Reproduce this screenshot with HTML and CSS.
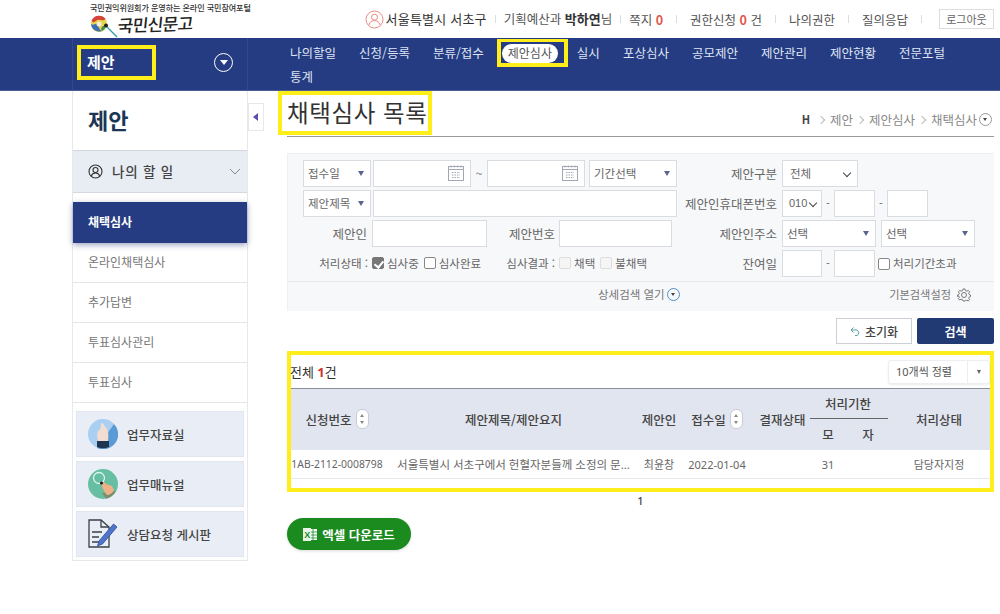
FILE: index.html
```html
<!DOCTYPE html>
<html lang="ko">
<head>
<meta charset="utf-8">
<title>국민신문고 채택심사 목록</title>
<link rel="stylesheet" href="styles.css">
</head>
<body>
<header class="top">
  <div class="logo">
    <div class="logo-sub">국민권익위원회가 운영하는 온라인 국민참여포털</div>
    <div class="logo-main">
      <svg class="logo-mark" width="28" height="24" viewBox="0 0 28 24"><circle cx="9" cy="10" r="8" fill="#e9d54a"/><path d="M1.500 7a8 8 0 0 1 14-2c-3 3-5 0-8 1s-3 4-6 1z" fill="#d5423a"/><path d="M1 10c3 2 4-1 6 0s1 5 5 7a8 8 0 0 1-11-7z" fill="#3c6fb5"/><path d="M12 17c-2-3 0-5 4-6a8 8 0 0 1-4 6z" fill="#3a8f5c"/><circle cx="9" cy="10" r="2.500" fill="#f3efe0"/><path d="M16 12l11 11" stroke="#2f9aa0" stroke-width="1.300"/><circle cx="16" cy="11.500" r="2" fill="#222"/></svg>
      <span class="logo-text">국민신문고</span>
    </div>
  </div>
  <nav class="util">
    <svg class="user-ico" width="19" height="19" viewBox="0 0 19 19" fill="none" stroke="#e98b84" stroke-width="1"><circle cx="9.5" cy="9.5" r="8.5"/><circle cx="9.5" cy="7.2" r="3"/><path d="M4 15c.6-3 2.8-4.4 5.5-4.4S14.400 12 15 15"/></svg>
    <span class="u-org">서울특별시 서초구</span><i class="sep"></i>
    <span>기획예산과 <b>박하연</b>님</span><i class="sep"></i>
    <span>쪽지 <em>0</em></span><i class="sep wide"></i>
    <span>권한신청 <em>0</em> 건</span><i class="sep wide"></i>
    <span>나의권한</span><i class="sep wide"></i>
    <span>질의응답</span><i class="sep wide"></i>
    <span class="logout">로그아웃</span>
  </nav>
</header>

<div class="navbar">
  <div class="nav-left">
    <span class="nav-title">제안</span>
    <span class="round-down"></span>
  </div>
  <ul class="gnb">
    <li>나의할일</li><li>신청/등록</li><li>분류/접수</li>
    <li class="gnb-on"><span>제안심사</span></li>
    <li>실시</li><li>포상심사</li><li>공모제안</li><li>제안관리</li><li>제안현황</li><li>전문포털</li><li>통계</li>
  </ul>
</div>

<div class="page">
  <aside class="side">
    <h2 class="side-title">제안</h2>
    <div class="side-todo">
      <svg width="15" height="15" viewBox="0 0 15 15" fill="none" stroke="#333" stroke-width="1.100"><circle cx="7.500" cy="7.500" r="6.500"/><circle cx="7.500" cy="6" r="2.500"/><path d="M3.300 12c.6-2 2.200-3 4.200-3s3.600 1 4.200 3"/></svg>
      <span class="todo-text">나의 할 일</span>
      <svg class="chev" width="12" height="7" viewBox="0 0 12 7" fill="none" stroke="#888"><path d="M1 1l5 5 5-5"/></svg>
    </div>
    <ul class="side-menu">
      <li class="on">채택심사</li><li>온라인채택심사</li><li>추가답변</li><li>투표심사관리</li><li>투표심사</li>
    </ul>
    <div class="side-links">
      <a class="side-link">
        <svg width="30" height="30" viewBox="0 0 30 30"><circle cx="15" cy="15" r="15" fill="#a9cff2"/><path d="M26 5a15 15 0 0 1-14 25 15 15 0 0 1-3-1z" fill="#5b9bd5"/><path d="M10 22c-1-5-1-8 0-10l2-1 1-6c0-1.500 2-1.500 2.500 0 1 2 3 4 4 6 1 3 1 7 .5 11z" fill="#f3dcd0"/><path d="M9 22h12v6a15 15 0 0 1-12 0z" fill="#1d3550"/></svg>
        <span>업무자료실</span>
      </a>
      <a class="side-link">
        <svg width="30" height="30" viewBox="0 0 30 30"><circle cx="15" cy="15" r="15" fill="#66bfa2"/><circle cx="11" cy="9" r="5.500" fill="none" stroke="#e2f4ed" stroke-width="1.300"/><path d="M28 22a15 15 0 0 1-10 7.700L14 24z" fill="#7c8f6a"/><path d="M13 14l3-1 2 2 6 2 2 4c-1 3-5 5-7 5-3-3-5-8-6-12z" fill="#eeb187"/><circle cx="13.500" cy="14" r="1.600" fill="#222"/></svg>
        <span>업무매뉴얼</span>
      </a>
      <a class="side-link">
        <svg width="30" height="30" viewBox="0 0 30 30" fill="none"><path d="M1 1h12l8 7v20H1z" stroke="#3a3f48" stroke-width="1.300"/><path d="M13 1v7h8M4 13h10M4 18h7M4 23h7" stroke="#3a3f48" stroke-width="1.300"/><path d="M11 22l-1.500 5 5-2L29 8l-3.500-3z" fill="#4f74c9" stroke="#2c4b9a" stroke-width=".8"/></svg>
        <span>상담요청 게시판</span>
      </a>
    </div>
  </aside>

  <button class="side-toggle" aria-label="메뉴 접기"></button>

  <main class="main">
    <div class="title-row">
      <h1 class="title">채택심사 목록</h1>
      <div class="crumb"><b>H</b><s></s>제안<s></s>제안심사<s></s>채택심사<span class="mini-down"></span></div>
    </div>

    <section class="search">
      <div class="s-row">
        <div class="s-left">
          <span class="ctl sel w68">접수일</span>
          <span class="ctl cal w98"><svg width="16" height="16" viewBox="0 0 16 16" fill="none" stroke="#a2a8b2"><rect x=".5" y="1.500" width="15" height="14"/><path d="M3 .5v2M6.300 .5v2M9.700 .5v2M13 .5v2M1 4.500h14"/><path d="M4 7.500h8M4 10h8M4 12.500h8" stroke-dasharray="1.500 1"/></svg></span>
          <span class="tilde">~</span>
          <span class="ctl cal w98"><svg width="16" height="16" viewBox="0 0 16 16" fill="none" stroke="#a2a8b2"><rect x=".5" y="1.500" width="15" height="14"/><path d="M3 .5v2M6.300 .5v2M9.700 .5v2M13 .5v2M1 4.500h14"/><path d="M4 7.500h8M4 10h8M4 12.500h8" stroke-dasharray="1.500 1"/></svg></span>
          <span class="ctl sel w88 ml2">기간선택</span>
        </div>
        <label class="s-label">제안구분</label>
        <div class="s-right"><span class="ctl chv w76">전체</span></div>
      </div>
      <div class="s-row">
        <div class="s-left">
          <span class="ctl sel w68">제안제목</span>
          <span class="ctl grow"></span>
        </div>
        <label class="s-label">제안인휴대폰번호</label>
        <div class="s-right">
          <span class="ctl chv w40 num">010</span><span class="dash">-</span>
          <span class="ctl w41"></span><span class="dash">-</span>
          <span class="ctl w41"></span>
        </div>
      </div>
      <div class="s-row">
        <div class="s-left">
          <label class="in-label l64">제안인</label>
          <span class="ctl w115"></span>
          <label class="in-label l65">제안번호</label>
          <span class="ctl w113"></span>
        </div>
        <label class="s-label">제안인주소</label>
        <div class="s-right">
          <span class="ctl sel w94">선택</span>
          <span class="ctl sel w94 ml5">선택</span>
        </div>
      </div>
      <div class="s-row">
        <div class="s-left checks">
          <span class="chk-title">처리상태 :</span>
          <i class="box checked"></i><span class="chk-t">심사중</span>
          <i class="box"></i><span class="chk-t">심사완료</span>
          <span class="chk-title res">심사결과 :</span>
          <i class="box off"></i><span class="chk-t">채택</span>
          <i class="box off"></i><span class="chk-t">불채택</span>
        </div>
        <label class="s-label">잔여일</label>
        <div class="s-right">
          <span class="ctl w40"></span><span class="dash">-</span>
          <span class="ctl w41"></span>
          <i class="box ml3"></i><span class="chk-t">처리기간초과</span>
        </div>
      </div>
      <div class="s-foot">
        <span class="open">상세검색 열기<span class="mini-down blue"></span></span>
        <span class="basic">기본검색설정
          <svg width="14" height="14" viewBox="0 0 14 14" fill="none" stroke="#777"><circle cx="7" cy="7" r="2.500"/><path d="M6 1h2l.4 1.600 1.500.6L11.300 2.400l1.300 1.400-.9 1.400.6 1.400L13.500 7v1.500l-1.200.4-.6 1.400.9 1.300-1.300 1.400-1.400-.8-1.500.5L8 13H6l-.4-1.300-1.500-.5-1.400.8-1.300-1.400.9-1.300-.6-1.400L.5 8.500V7l1.200-.4.6-1.400-.9-1.400 1.300-1.400 1.400.8 1.500-.6z"/></svg>
        </span>
      </div>
    </section>

    <div class="actions">
      <button class="btn-reset"><svg width="11" height="9" viewBox="0 0 11 9" fill="none" stroke="#5aa0a8"><path d="M3.500.5L1 3l2.500 2.500M1 3h6a3 3 0 0 1 0 5.500H5"/></svg>초기화</button>
      <button class="btn-search">검색</button>
    </div>

    <section class="list">
      <div class="list-head">
        <span class="total">전체 <em>1</em>건</span>
        <div class="per"><span>10개씩 정렬</span><i></i></div>
      </div>
      <table class="tbl">
        <colgroup>
          <col class="c1"><col class="c2"><col class="c3"><col class="c4"><col class="c5"><col class="c6"><col class="c7"><col class="c8">
        </colgroup>
        <thead>
          <tr>
            <th rowspan="2"><span class="th-in">신청번호<span class="sort"></span></span></th>
            <th rowspan="2" class="th-subj">제안제목/제안요지</th>
            <th rowspan="2">제안인</th>
            <th rowspan="2"><span class="th-in">접수일<span class="sort"></span></span></th>
            <th rowspan="2">결재상태</th>
            <th colspan="2" class="th-top">처리기한</th>
            <th rowspan="2">처리상태</th>
          </tr>
          <tr><th class="th-sub">모</th><th class="th-sub">자</th></tr>
        </thead>
        <tbody>
          <tr>
            <td class="no">1AB-2112-0008798</td>
            <td class="subj">서울특별시 서초구에서 헌혈자분들께 소정의 문...</td>
            <td>최윤창</td>
            <td>2022-01-04</td>
            <td></td>
            <td>31</td>
            <td></td>
            <td>담당자지정</td>
          </tr>
        </tbody>
      </table>
    </section>
    <div class="pager">1</div>
    <button class="btn-excel">
      <svg width="14" height="13" viewBox="0 0 14 13"><rect x="5" y="1" width="9" height="11" fill="#fff"/><path d="M7 1v11M10 1v11M5 4h9M5 7h9M5 10h9" stroke="#1a8a22" stroke-width=".8"/><rect y="0" width="8" height="13" fill="#e9f5e9"/><text x="1.200" y="10" class="x-mark">X</text></svg>
      엑셀 다운로드
    </button>
  </main>
</div>
</body>
</html>
```

FILE: styles.css
```css
* { box-sizing: border-box; }
html, body { margin: 0; padding: 0; }
body {
  width: 1000px; height: 614px; overflow: hidden; background: #fff; color: #555;
  font: 12px/1.2 "Noto Sans CJK KR", "Noto Sans", sans-serif;
}
ul { list-style: none; margin: 0; padding: 0; }
h1, h2 { margin: 0; font-weight: 400; }
em { font-style: normal; }
button { font-family: inherit; cursor: pointer; }

/* top bar */
.top { height: 38px; display: flex; padding-left: 90px; padding-right: 6px; justify-content: space-between; }
.logo { width: 170px; padding-top: 3px; }
.logo-sub { font-size: 8.100px; line-height: 10px; color: #333; white-space: nowrap; font-weight: 500; letter-spacing: -.1px; }
.logo-main { display: flex; align-items: flex-start; height: 25px; }
.logo-mark { margin-top: 1px; }
.logo-text { font-size: 17px; font-weight: 500; line-height: 22px; color: #222; margin-left: 0; letter-spacing: -.7px; transform: skewX(-8deg) rotate(-2deg); }
.util { display: flex; align-items: center; height: 38px; font-size: 12.500px; color: #555; white-space: nowrap; }
.user-ico { margin-right: 2px; }
.u-org { font-size: 13px; color: #333; letter-spacing: .2px; }
.util b { font-weight: 700; color: #333; font-size: 13px; }
.util em { color: #e0574f; font-weight: 700; }
.sep { width: 1px; height: 8px; background: #ddd; margin: 0 8px; }
.sep.wide { margin: 0 13px; }
.logout { border: 1px solid #ddd; height: 20px; width: 55px; font-size: 11px; line-height: 18px; text-align: center; color: #666; margin-left: 4px; }

/* nav */
.navbar { height: 53px; background: #253c82; display: flex; padding-left: 72px; border-bottom: 1px solid #4a5c96; }
.nav-left {
  width: 176px; display: flex; align-items: flex-start; justify-content: space-between;
  border-left: 1px solid #33488c; border-right: 1px solid #33488c; padding: 7px 14px 0 4px;
}
.nav-title {
  width: 79px; height: 35px; border: 4px solid #ffee1a; color: #fff; font-weight: 700; font-size: 15px;
  line-height: 26px; padding-left: 6px;
}
.round-down {
  width: 19px; height: 19px; margin-top: 8px; border: 1px solid #fff; border-radius: 50%; position: relative;
}
.round-down::after {
  content: ""; position: absolute; left: 5px; top: 6px; border: 4px solid transparent; border-top: 5px solid #fff; border-bottom: 0;
}
.gnb { display: flex; flex-wrap: wrap; width: 680px; margin-left: 42px; column-gap: 23px; padding-top: 4px; }
.gnb li { color: #dfe4f2; font-size: 12.500px; line-height: 22px; height: 22px; white-space: nowrap; }
.gnb li.gnb-on {
  height: 28px; width: 71px; margin: -3px -14px -3px -10px; border: 4px solid #ffee1a; border-top-width: 3px; padding: 2px 0 0 1px;
}
.gnb-on span { display: block; background: #fff; color: #555; border-radius: 10px; width: 56px; height: 19px; line-height: 18px; text-align: center; font-size: 12px; }
.gnb li:last-child { flex-basis: 100%; }

/* page */
.page { display: flex; padding-left: 72px; }
.side { width: 176px; height: 470px; border: 1px solid #e6e8ec; border-top: 0; }
.side-title { height: 59px; font-size: 22px; font-weight: 700; color: #1c3655; line-height: 57px; padding-left: 15px; }
.side-todo {
  height: 43px; display: flex; align-items: center; background: #e8edf4; padding: 0 6px 0 15px;
  border-top: 1px solid #d3d8df; border-bottom: 1px solid #d3d8df;
}
.todo-text { flex: 1; margin-left: 9px; font-size: 13.500px; font-weight: 500; letter-spacing: .8px; color: #444; }
.side-menu { padding-top: 9px; }
.side-menu li {
  height: 40px; line-height: 37px; padding-left: 15px; border-bottom: 1px solid #e3e5e9; font-size: 12px; color: #777;
}
.side-menu li.on { height: 41px; line-height: 39px; background: #253c82; color: #fff; font-weight: 700; border: 0; box-shadow: 0 2px 6px rgba(30,50,110,.45); }
.side-links { padding: 8px 3px 0; display: flex; flex-direction: column; gap: 4px; }
.side-link {
  height: 46px; background: #e9edf5; border: 1px solid #e2e6ee; display: flex; align-items: center; gap: 9px; padding-left: 11px;
  font-size: 12.500px; font-weight: 500; color: #444;
}
.side-toggle {
  width: 16px; height: 28px; margin-top: 12px; padding: 0; background: #fff; border: 1px solid #e6e8ec; position: relative;
}
.side-toggle::after {
  content: ""; position: absolute; left: 4px; top: 9px; border: 4px solid transparent; border-right: 5px solid #5a4fb5; border-left: 0;
}
.main { width: 707px; margin-left: 23px; }

.title-row { height: 46px; border-bottom: 1px solid #999; display: flex; justify-content: space-between; align-items: flex-end; }
.title {
  margin: 0 0 1px -9px; width: 154px; height: 44px; border: 4px solid #ffee1a; font-size: 23.500px; color: #333;
  line-height: 34px; padding-left: 5px; white-space: nowrap; letter-spacing: .6px;
}
.crumb { display: flex; align-items: center; font-size: 12.500px; color: #888; padding: 0 2px 9px 0; }
.crumb b { color: #444; font-size: 11px; margin-right: 4px; }
.crumb s {
  width: 6px; height: 6px; border-top: 1px solid #bbb; border-right: 1px solid #bbb; transform: rotate(45deg); margin: 0 6px 0 4px;
}
.mini-down { display: inline-block; width: 13px; height: 13px; border: 1px solid #999; border-radius: 50%; margin-left: 2px; position: relative; flex: none; }
.mini-down::after { content: ""; position: absolute; left: 3px; top: 4px; border: 2.500px solid transparent; border-top: 3.500px solid #444; border-bottom: 0; }
.mini-down.blue { border-color: #4d8fc4; }

/* search */
.search { margin-top: 16px; height: 158px; background: #f7f8fa; border: 1px solid #eff0f3; border-width: 1px 0 0 1px; padding-top: 6px; }
.s-row { display: flex; height: 27px; margin-bottom: 3px; align-items: center; }
.s-left { width: 389px; padding-left: 15px; display: flex; align-items: center; gap: 2px; flex: none; }
.s-label { width: 100px; text-align: right; font-size: 12.500px; color: #666; white-space: nowrap; flex: none; }
.s-right { display: flex; align-items: center; margin-left: 5px; }
.ctl {
  height: 27px; background: #fff; border: 1px solid #d9dce1; font-size: 11.500px; color: #666; line-height: 25px; padding-left: 4px;
  display: block; position: relative; flex: none;
}
.sel::after { content: ""; position: absolute; right: 6px; top: 10px; border: 3.500px solid transparent; border-top: 5px solid #5a6490; border-bottom: 0; }
.chv { padding-left: 7px; }
.chv::after {
  content: ""; position: absolute; right: 7px; top: 9px; width: 5px; height: 5px; border-right: 1.500px solid #444; border-bottom: 1.500px solid #444; transform: rotate(45deg);
}
.num { padding-left: 6px; font: 11px/25px "Liberation Sans", sans-serif; }
.num::after { right: 5px; }
.cal svg { position: absolute; right: 6px; top: 4px; }
.w68 { width: 68px; } .w98 { width: 98px; } .w88 { width: 88px; } .w76 { width: 76px; }
.w40 { width: 40px; } .w41 { width: 41px; } .w115 { width: 115px; } .w113 { width: 113px; } .w94 { width: 94px; }
.grow { flex: 1; }
.tilde { width: 12px; text-align: center; color: #777; }
.dash { width: 12px; text-align: center; color: #666; font-size: 11px; }
.ml2 { margin-left: 2px; }
.ml5 { margin-left: 5px; }
.ml3 { margin-left: 3px; }
.in-label { text-align: right; font-size: 12.500px; color: #666; white-space: nowrap; }
.l64 { width: 64px; margin-right: 3px; }
.l65 { width: 65px; margin-right: 2px; margin-left: 1px; }
.checks { gap: 0; font-size: 11.500px; color: #666; }
.chk-title { width: 65px; text-align: right; margin-right: 4px; white-space: nowrap; }
.chk-title.res { width: 69px; margin-right: 4px; }
.box { width: 12px; height: 12px; background: #fff; border: 1px solid #888; border-radius: 2px; display: inline-block; flex: none; position: relative; margin-right: 3px; }
.box.off { border-color: #ddd; background: #f5f5f5; }
.box.checked { background: #777; border-color: #777; }
.box.checked::after { content: ""; position: absolute; left: 3px; top: 1px; width: 4px; height: 7px; border-right: 2px solid #fff; border-bottom: 2px solid #fff; transform: rotate(40deg); }
.chk-t { margin-right: 5px; font-size: 11.500px; color: #666; white-space: nowrap; }
.s-foot { border-top: 1px solid #e6e8ec; margin-top: 4px; height: 27px; display: flex; align-items: center; font-size: 11.500px; color: #777; }
.open { margin-left: 310px; display: flex; align-items: center; white-space: nowrap; }
.basic { margin-left: auto; margin-right: 23px; display: flex; align-items: center; gap: 6px; white-space: nowrap; font-size: 11.200px; }

.actions { display: flex; justify-content: flex-end; gap: 5px; margin-top: 7px; height: 26px; }
.btn-reset { width: 76px; height: 26px; background: #fff; border: 1px solid #ccd0d6; font-size: 12px; font-weight: 500; color: #444; display: flex; align-items: center; justify-content: center; gap: 4px; padding: 0; }
.btn-search { width: 77px; height: 26px; background: #213a73; border: 0; border-radius: 2px; color: #fff; font-size: 12px; font-weight: 700; padding: 0; }

/* list */
.list { margin-top: 7px; height: 141px; border: 4px solid #ffee1a; width: 707px; }
.list-head { height: 33px; display: flex; justify-content: space-between; align-items: flex-start; }
.total { font: 13px/16px "Noto Sans", "Noto Sans CJK KR", sans-serif; margin: 9px 0 0 -1px; color: #333; }
.total em { color: #c33; font-weight: 700; }
.per { width: 102px; height: 24px; margin-top: 5px; background: #fff; border: 1px solid #eceef1; border-radius: 3px; box-shadow: 0 1px 2px rgba(0,0,0,.08); display: flex; align-items: center; font: 11px "Noto Sans", "Noto Sans CJK KR", sans-serif; color: #555; }
.per span { width: 79px; padding-left: 7px; border-right: 1px solid #eee; line-height: 22px; white-space: nowrap; }
.per i { border: 2.500px solid transparent; border-top: 4px solid #666; border-bottom: 0; margin-left: 9px; }
.tbl { border-collapse: collapse; table-layout: fixed; width: 699px; border-top: 1px solid #8a8f9e; }
.c1 { width: 92px; } .c2 { width: 258px; } .c3 { width: 36px; } .c4 { width: 80px; } .c5 { width: 51px; } .c6 { width: 40px; } .c7 { width: 40px; } .c8 { width: 102px; }
.tbl th { background: #e1e5ef; font-size: 12.500px; font-weight: 500; color: #444; padding: 0; height: 31px; white-space: nowrap; }
.tbl .th-subj { padding-left: 3px; }
.th-in { display: flex; align-items: center; justify-content: center; }
.tbl .th-top { height: 30px; position: relative; }
.tbl .th-top::after { content: ""; position: absolute; left: 2px; right: 0; bottom: 0; height: 1px; background: #666; }
.tbl .th-sub { height: 31px; }
.sort {
  flex: none; width: 13px; height: 20px; border: 1px solid #c8ccd4; border-radius: 6px; background: #fff; margin-left: 4px; position: relative;
}
.sort::before { content: ""; position: absolute; left: 3.500px; top: 4px; border: 2px solid transparent; border-bottom: 3px solid #888; border-top: 0; }
.sort::after { content: ""; position: absolute; left: 3.500px; bottom: 4px; border: 2px solid transparent; border-top: 3px solid #888; border-bottom: 0; }
.tbl td { height: 29px; text-align: center; font: 11px "Noto Sans", "Noto Sans CJK KR", sans-serif; color: #666; padding: 1px 0 0; border-bottom: 1px solid #e6e8ec; white-space: nowrap; overflow: hidden; }
.tbl td.no { font-size: 10.400px; }
.tbl td.subj { padding-left: 3px; font-size: 11.500px; }
.pager { height: 15px; line-height: 15px; text-align: center; font: 500 11px/15px "Noto Sans", sans-serif; color: #444; margin-top: 1px; }
.btn-excel {
  display: flex; align-items: center; justify-content: center; gap: 5px; margin-top: 10px; width: 124px; height: 32px; border: 0; border-radius: 16px;
  background: #1b8a1f; color: #fff; font-size: 12.500px; font-weight: 700; padding: 0; box-shadow: 0 1px 3px rgba(0,0,0,.15);
}
.x-mark { font: 700 9px "Liberation Sans", sans-serif; fill: #1a8a22; }
```
